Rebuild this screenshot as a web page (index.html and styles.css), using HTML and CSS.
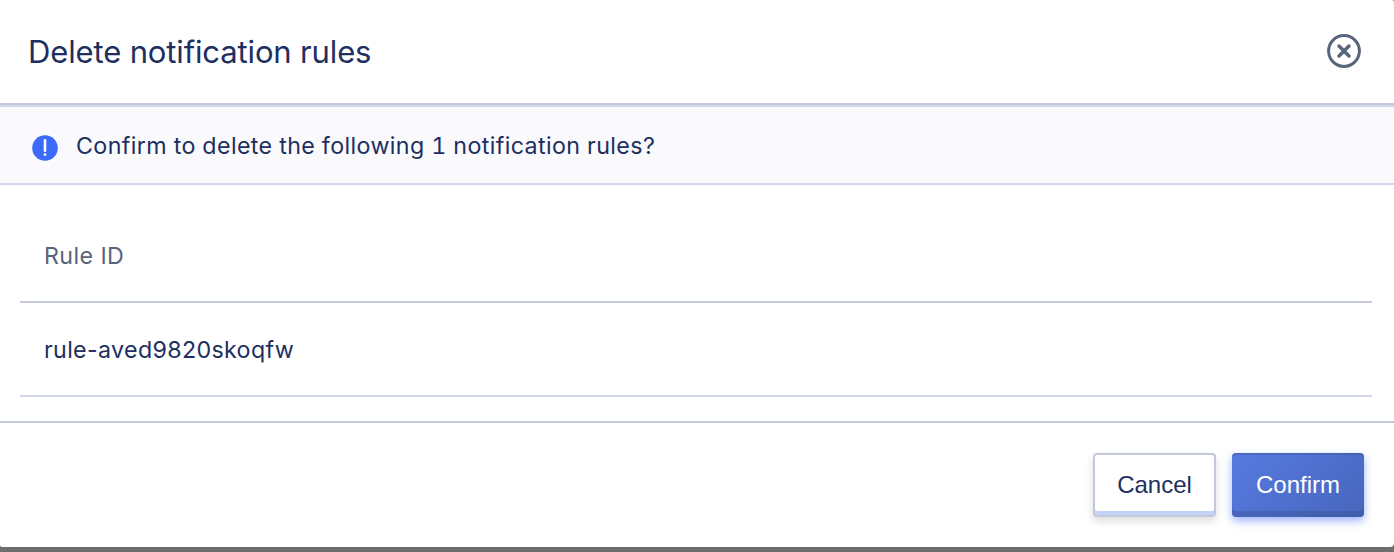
FILE: index.html
```html
<!DOCTYPE html>
<html lang="en">
<head>
<meta charset="utf-8">
<title>Delete notification rules</title>
<link rel="stylesheet" href="styles.css">
</head>
<body>
<section class="dialog" role="dialog">
  <header class="dialog-header">
    <h1 class="dialog-title">Delete notification rules</h1>
    <svg class="close-icon" viewBox="0 0 34 34" width="34" height="34">
      <circle cx="17" cy="17" r="15.4"/>
      <path d="M12 12 22 22M22 12 12 22"/>
    </svg>
  </header>
  <div class="notice">
    <svg class="notice-icon" viewBox="0 0 26 26" width="26" height="26">
      <circle cx="13" cy="13" r="12.8" fill="#3d6bf9"/>
      <path d="M13 5.2V15.8" stroke="#fff" stroke-width="2.6" stroke-linecap="round"/>
      <circle cx="13" cy="19.6" r="1.4" fill="#fff"/>
    </svg>
    <span class="notice-text">Confirm to delete the following 1 notification rules?</span>
  </div>
  <div class="rules">
    <div class="rules-head">Rule ID</div>
    <div class="rules-row">rule-aved9820skoqfw</div>
  </div>
  <footer class="dialog-footer">
    <button class="button button-cancel">Cancel</button>
    <button class="button button-confirm">Confirm</button>
  </footer>
</section>
</body>
</html>
```
FILE: styles.css
```css
* { box-sizing: border-box; }
body {
  margin: 0;
  height: 552px;
  overflow: hidden;
  background: #6d6d6d;
  font-family: Inter, "Liberation Sans", sans-serif;
  color: #212f60;
}
.dialog {
  height: 547px;
  background: #fff;
  border-radius: 0 2px 4px 2px;
}
.dialog-header {
  display: flex;
  align-items: center;
  justify-content: space-between;
  height: 105px;
  padding: 0 33px 0 28px;
  border-bottom: 2px solid #c4c9da;
}
.dialog-title {
  margin: 0;
  font-size: 31px;
  font-weight: 400;
  line-height: 40px;
  letter-spacing: -0.14px;
  white-space: nowrap;
}
.close-icon {
  margin-bottom: 1px;
  fill: none;
  stroke: #58657a;
  stroke-width: 3;
  stroke-linecap: round;
}
.close-icon path { stroke-width: 3.5; }
.notice {
  display: flex;
  align-items: center;
  gap: 18px;
  height: 80px;
  padding: 0 32px;
  background: #fafafd;
  border: solid #d3d7eb;
  border-width: 2px 0;
}
.notice-icon { margin-top: 5px; }
.notice-text {
  font-size: 23.25px;
  font-variant-numeric: tabular-nums;
  letter-spacing: 0.38px;
  white-space: nowrap;
}
.rules { padding: 24px 22px 24px 20px; }
.rules-head, .rules-row {
  height: 94px;
  padding: 0 24px;
  font-size: 23.25px;
  line-height: 94px;
  letter-spacing: 0.4px;
  border-bottom: 2px solid #d3d7eb;
}
.rules-row { letter-spacing: 0.33px; }
.rules-head {
  color: #58657a;
  border-bottom-color: #c4c9da;
}
.dialog-footer {
  display: flex;
  justify-content: flex-end;
  gap: 16px;
  padding: 30px 30px 0;
  border-top: 2px solid #c4c9da;
}
.button {
  height: 64px;
  padding: 0;
  font: 24px/60px "Liberation Sans", Arial, sans-serif;
  border-radius: 4px;
}
.button-cancel {
  width: 123px;
  color: #212f60;
  background: #fff;
  border: 2px solid #c4c9da;
  box-shadow: inset 0 -4px #c3d2f7, 0 4px 8px rgba(0, 0, 0, 0.14);
}
.button-confirm {
  width: 132px;
  color: #fff;
  background: linear-gradient(135deg, #567ae0, #4866bd);
  border: 0;
  box-shadow: inset 0 -6px rgba(52, 72, 130, 0.32), inset 0 2px rgba(52, 72, 130, 0.32), 0 4px 8px rgba(61, 107, 249, 0.5);
}
```
